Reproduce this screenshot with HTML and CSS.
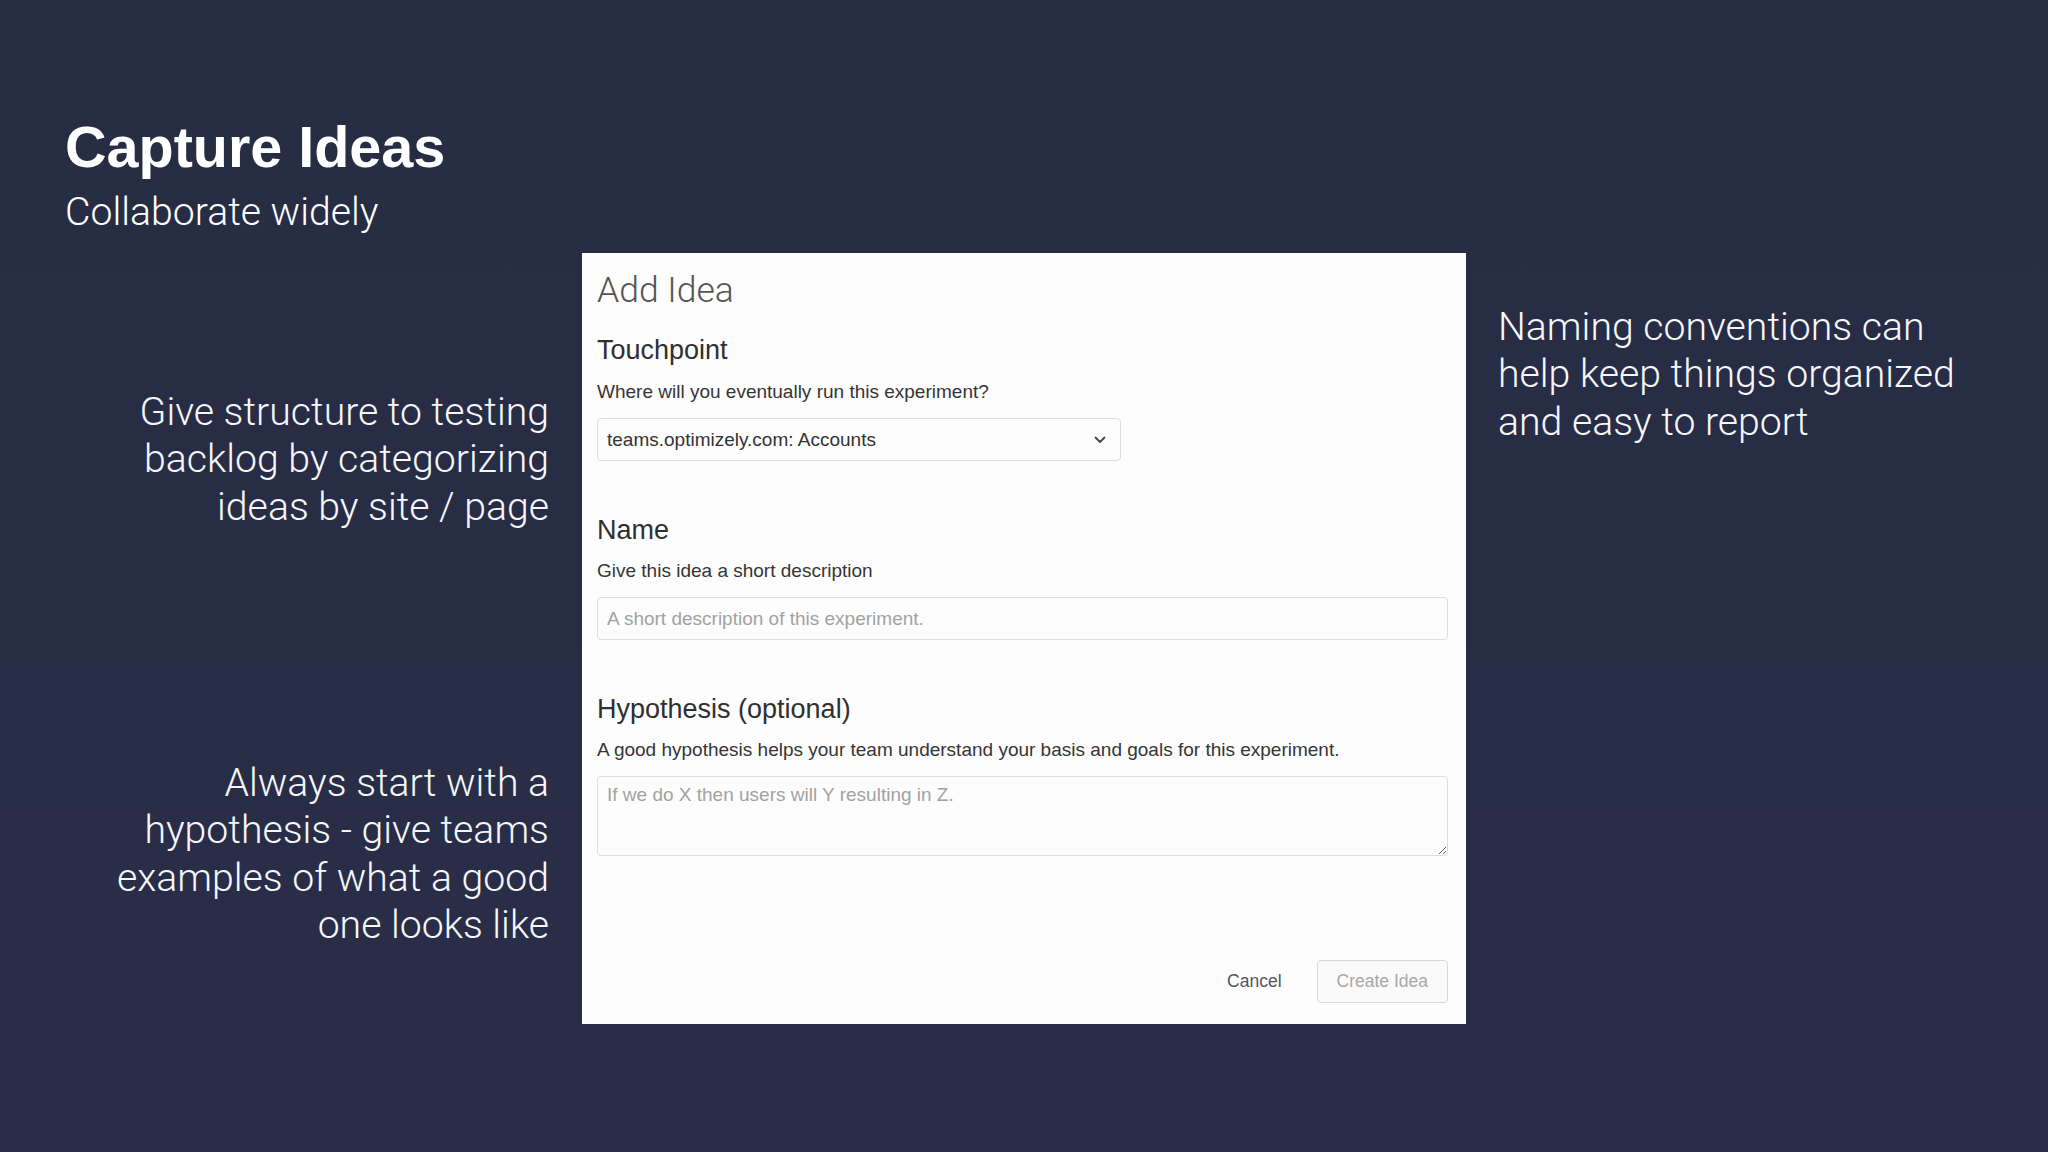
FILE: index.html
```html
<!DOCTYPE html>
<html lang="en">
<head>
<meta charset="utf-8">
<title>Capture Ideas</title>
<link rel="stylesheet" href="styles.css">
</head>
<body>
<div class="slide">
  <header class="head">
    <h1 class="title">Capture Ideas</h1>
    <p class="subtitle">Collaborate widely</p>
  </header>
  <div class="content">
    <div class="col-left">
      <p class="note note-1">Give structure to testing<br>backlog by categorizing<br>ideas by site / page</p>
      <p class="note note-2">Always start with a<br>hypothesis - give teams<br>examples of what a good<br>one looks like</p>
    </div>
    <section class="modal">
      <h2 class="modal-title">Add Idea</h2>
      <h3 class="field-label first">Touchpoint</h3>
      <p class="field-help first-help">Where will you eventually run this experiment?</p>
      <div class="select">
        <span>teams.optimizely.com: Accounts</span>
        <svg class="chevron" width="12" height="8" viewBox="0 0 12 8"><polyline points="1.5,1.5 6,6 10.5,1.5" fill="none" stroke="#444" stroke-width="1.8" stroke-linecap="round" stroke-linejoin="round"/></svg>
      </div>
      <h3 class="field-label">Name</h3>
      <p class="field-help">Give this idea a short description</p>
      <input class="text-input" type="text" placeholder="A short description of this experiment.">
      <h3 class="field-label">Hypothesis (optional)</h3>
      <p class="field-help">A good hypothesis helps your team understand your basis and goals for this experiment.</p>
      <textarea class="text-area" placeholder="If we do X then users will Y resulting in Z."></textarea>
      <div class="actions">
        <span class="cancel">Cancel</span>
        <span class="btn">Create Idea</span>
      </div>
    </section>
    <div class="col-right">
      <p class="note note-3">Naming conventions can<br>help keep things organized<br>and easy to report</p>
    </div>
  </div>
</div>
</body>
</html>
```
FILE: styles.css
```css
html, body {
  margin: 0;
  padding: 0;
  background: #282d45;
}

.slide {
  width: 2048px;
  height: 1152px;
  box-sizing: border-box;
  padding: 113px 0 0 65px;
  background: linear-gradient(180deg, #262d42 0%, #282d46 50%, #2a2d48 100%);
  font-family: "Liberation Sans", Arial, Helvetica, sans-serif;
  color: #ffffff;
  overflow: hidden;
}

.title {
  margin: 0;
  font-size: 57.5px;
  line-height: 68px;
  font-weight: 700;
}

.subtitle {
  margin: 8px 0 0;
  font-family: Roboto, "Liberation Sans", Arial, sans-serif;
  font-size: 39.2px;
  line-height: 47.5px;
  font-weight: 300;
}

.content {
  display: flex;
  margin-top: 16px;
}

.col-left {
  flex: none;
  width: 484px;
  text-align: right;
}

.note {
  margin: 0;
  font-family: Roboto, "Liberation Sans", Arial, sans-serif;
  font-size: 39.2px;
  line-height: 47.5px;
  font-weight: 300;
  color: #f6f7fa;
}

.note-1 {
  margin-top: 136px;
}

.note-2 {
  margin-top: 228.5px;
}

.col-right {
  flex: none;
  margin-left: 32px;
  padding-top: 51px;
}

.modal {
  flex: none;
  margin-left: 33px;
  width: 884px;
  height: 771px;
  box-sizing: border-box;
  padding: 17px 18px 21px 15px;
  background: #fdfdfd;
  display: flex;
  flex-direction: column;
  color: #333333;
}

.modal-title {
  margin: 0;
  font-family: Roboto, "Liberation Sans", Arial, sans-serif;
  font-size: 35.5px;
  line-height: 40px;
  font-weight: 300;
  color: #555555;
}

.field-label {
  margin: 52.5px 0 0;
  font-size: 27px;
  line-height: 32px;
  font-weight: 400;
  color: #2f2f2f;
}

.field-label.first {
  margin-top: 24px;
}

.field-help {
  margin: 13px 0 0;
  font-size: 19px;
  line-height: 24px;
  color: #353535;
}

.field-help.first-help {
  margin-top: 14px;
}

.select {
  margin-top: 14.5px;
  width: 524px;
  height: 43px;
  box-sizing: border-box;
  border: 1px solid #dddddd;
  border-radius: 4px;
  padding: 0 14px 0 9px;
  display: flex;
  align-items: center;
  justify-content: space-between;
  font-size: 19px;
  line-height: 24px;
  color: #333333;
}

.chevron {
  display: block;
}

.text-input,
.text-area {
  display: block;
  margin: 14.5px 0 0;
  width: 851px;
  box-sizing: border-box;
  border: 1px solid #dddddd;
  border-radius: 4px;
  background: #fdfdfd;
  font-family: "Liberation Sans", Arial, Helvetica, sans-serif;
  font-size: 19px;
  line-height: 24px;
  color: #333333;
  outline: none;
}

.text-input {
  height: 43px;
  padding: 0 9px;
}

.text-area {
  height: 80px;
  padding: 6px 9px;
  resize: vertical;
}

.text-input::placeholder,
.text-area::placeholder {
  color: #a2a2a2;
  opacity: 1;
}

.actions {
  margin-top: auto;
  display: flex;
  justify-content: flex-end;
  align-items: center;
  gap: 35px;
  font-size: 17.5px;
}

.cancel {
  color: #555555;
  line-height: 43px;
}

.btn {
  height: 43px;
  box-sizing: border-box;
  line-height: 41px;
  padding: 0 19px;
  border: 1px solid #d8d8d8;
  border-radius: 4px;
  background: #fafafa;
  color: #a8a8a8;
}
```
